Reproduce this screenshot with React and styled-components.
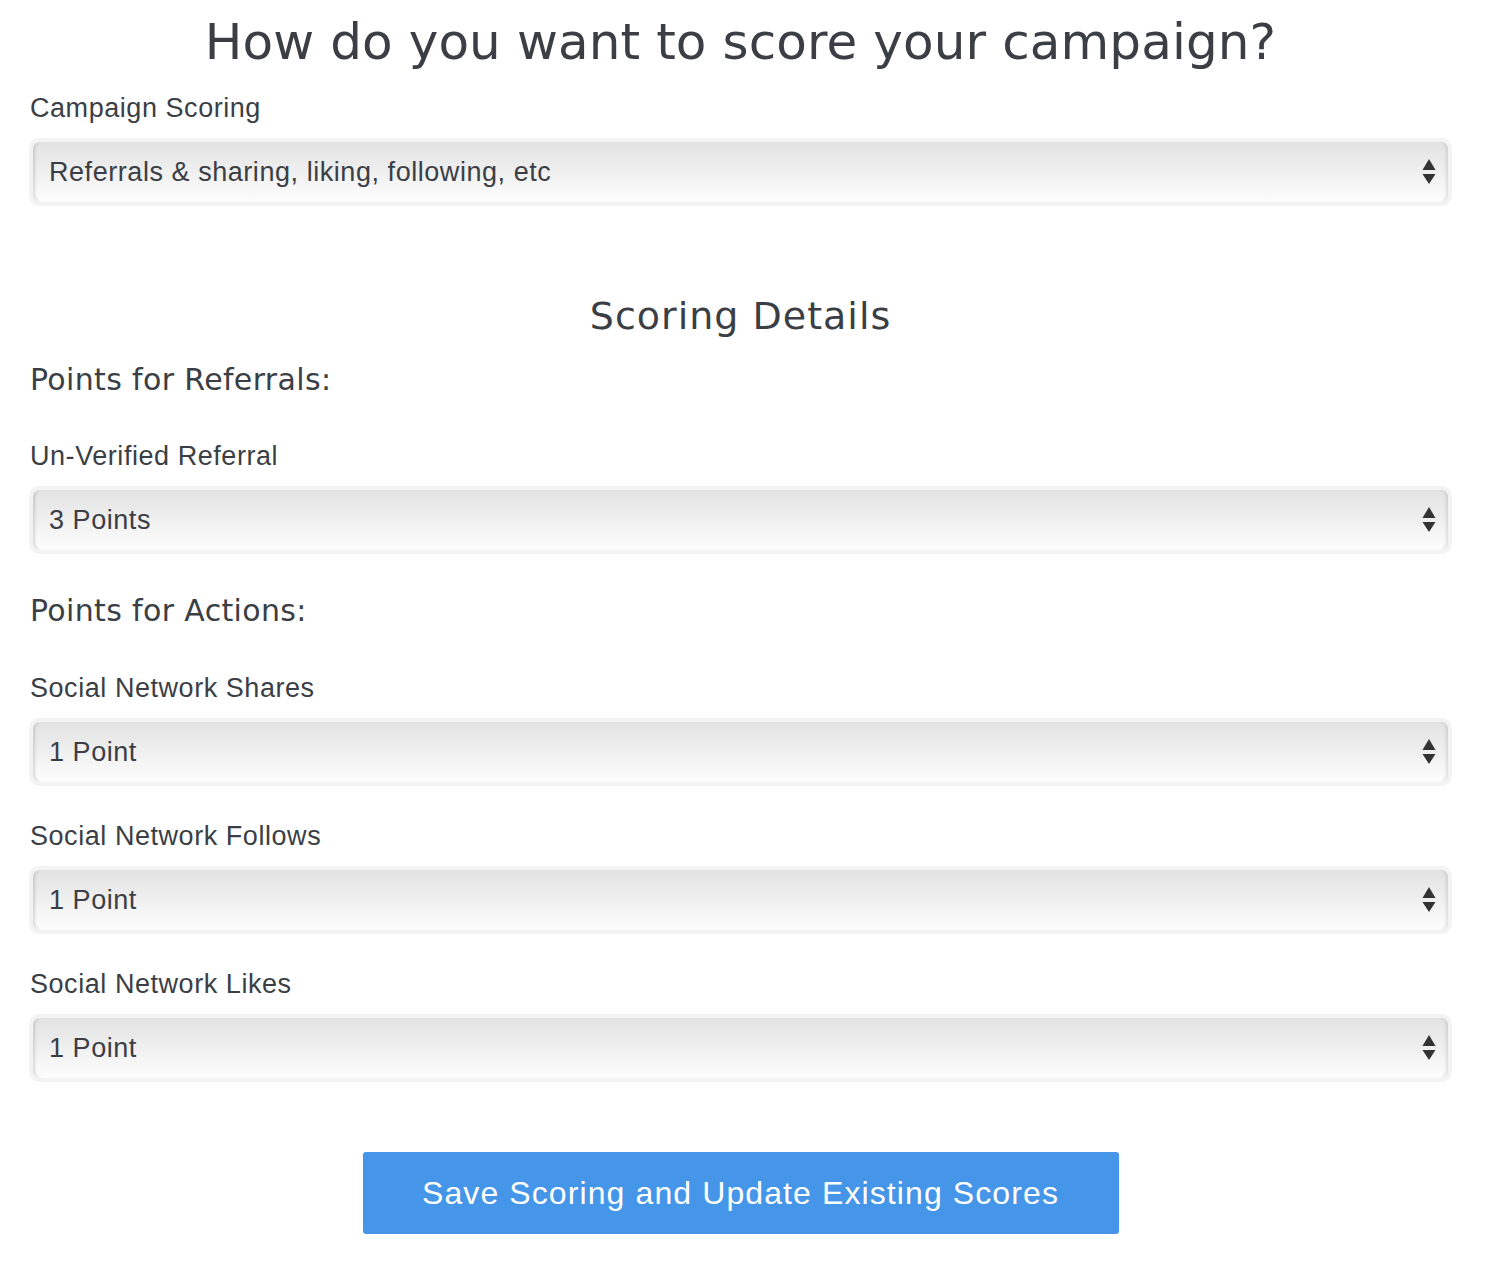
import React from "react";
import styled, { createGlobalStyle } from "styled-components";

const Global = createGlobalStyle`
  html, body { margin: 0; padding: 0; background: #fff; }
  body { font-family: "Liberation Sans", Arial, sans-serif; color: #3b3f45; }
`;

const Page = styled.div`
  width: 1423px;
  margin-left: 29px;
  display: flex;
  flex-direction: column;
`;

const Title = styled.h1`
  margin: 12px 0 0;
  font-family: Verdana, "DejaVu Sans", sans-serif;
  font-weight: normal;
  font-size: 50px;
  letter-spacing: 0.1px;
  line-height: 60px;
  text-align: center;
  color: #3b3f45;
`;

const SectionTitle = styled.h2`
  margin: ${(p) => p.$mt}px 0 0;
  font-family: Verdana, "DejaVu Sans", sans-serif;
  font-weight: normal;
  font-size: 38px;
  letter-spacing: 1px;
  line-height: 40px;
  text-align: center;
  color: #3b3f45;
`;

const GroupTitle = styled.h3`
  margin: ${(p) => p.$mt}px 0 0 1px;
  font-family: Verdana, "DejaVu Sans", sans-serif;
  font-weight: normal;
  font-size: 30px;
  letter-spacing: 0.35px;
  line-height: 36px;
  color: #3b3f45;
`;

const Label = styled.label`
  display: block;
  margin: ${(p) => p.$mt}px 0 15px 1px;
  font-size: 27px;
  letter-spacing: 0.55px;
  line-height: 30px;
  color: #3b3f45;
`;

const SelectRing = styled.div`
  position: relative;
  height: 68px;
  box-sizing: border-box;
  padding: 4px;
  border-radius: 10px;
  background: #f3f3f3;
`;

const SelectBox = styled.select`
  appearance: none;
  -webkit-appearance: none;
  width: 100%;
  height: 60px;
  box-sizing: border-box;
  border: none;
  border-radius: 7px;
  padding: 0 50px 0 16px;
  font-family: "Liberation Sans", Arial, sans-serif;
  font-size: 27px;
  letter-spacing: 0.55px;
  color: #3b3f45;
  outline: none;
  background: linear-gradient(to bottom, #e3e3e4 0%, #ededee 40%, #f7f7f7 75%, #fdfdfd 100%);
  box-shadow: inset 4px 0 3px -2px rgba(0, 0, 0, 0.13),
    inset -4px 0 3px -2px rgba(0, 0, 0, 0.1);
`;

const Arrows = styled.svg`
  position: absolute;
  right: 16px;
  top: 50%;
  transform: translateY(-50%);
  pointer-events: none;
`;

const ButtonRow = styled.div`
  display: flex;
  justify-content: center;
  margin: 70px 0 34px;
`;

const SaveButton = styled.button`
  width: 756px;
  height: 82px;
  border: none;
  border-radius: 3px;
  background: #4596e8;
  color: #fff;
  font-family: "Liberation Sans", Arial, sans-serif;
  font-size: 32px;
  letter-spacing: 1.1px;
  cursor: pointer;
`;

function Select({ value }) {
  return (
    <SelectRing>
      <SelectBox defaultValue={value}>
        <option>{value}</option>
      </SelectBox>
      <Arrows width="14" height="26" viewBox="0 0 14 26">
        <polygon points="7,0 13.5,11 0.5,11" fill="#333" />
        <polygon points="0.5,15 13.5,15 7,25" fill="#333" />
      </Arrows>
    </SelectRing>
  );
}

export default function App() {
  return (
    <>
      <Global />
      <Page>
        <Title>How do you want to score your campaign?</Title>
        <Label $mt={21}>Campaign Scoring</Label>
        <Select value="Referrals & sharing, liking, following, etc" />

        <SectionTitle $mt={90}>Scoring Details</SectionTitle>
        <GroupTitle $mt={26}>Points for Referrals:</GroupTitle>
        <Label $mt={43}>Un-Verified Referral</Label>
        <Select value="3 Points" />

        <GroupTitle $mt={39}>Points for Actions:</GroupTitle>
        <Label $mt={44}>Social Network Shares</Label>
        <Select value="1 Point" />
        <Label $mt={35}>Social Network Follows</Label>
        <Select value="1 Point" />
        <Label $mt={35}>Social Network Likes</Label>
        <Select value="1 Point" />

        <ButtonRow>
          <SaveButton>Save Scoring and Update Existing Scores</SaveButton>
        </ButtonRow>
      </Page>
    </>
  );
}
